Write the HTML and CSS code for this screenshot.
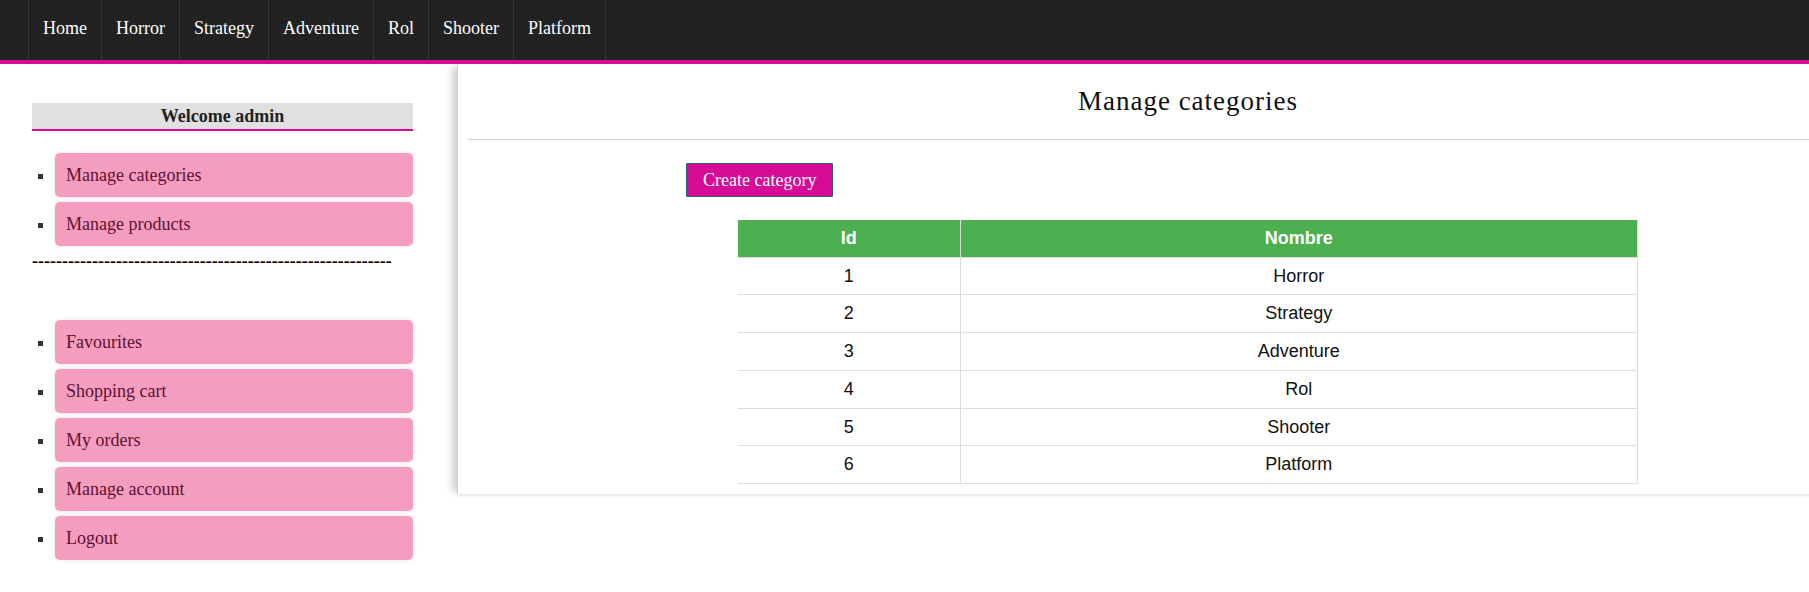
FILE: index.html
```html
<!DOCTYPE html>
<html lang="en">
<head>
<meta charset="utf-8">
<title>Manage categories</title>
<link rel="stylesheet" href="styles.css">
</head>
<body>
<nav class="topnav">
  <ul class="topnav-list">
    <li><a href="#">Home</a></li>
    <li><a href="#">Horror</a></li>
    <li><a href="#">Strategy</a></li>
    <li><a href="#">Adventure</a></li>
    <li><a href="#">Rol</a></li>
    <li><a href="#">Shooter</a></li>
    <li><a href="#">Platform</a></li>
  </ul>
</nav>
<div class="layout">
  <aside class="sidebar">
    <div class="welcome">Welcome admin</div>
    <ul class="side-menu side-menu-admin">
      <li><a href="#">Manage categories</a></li>
      <li><a href="#">Manage products</a></li>
    </ul>
    <div class="divider">------------------------------------------------------------</div>
    <ul class="side-menu side-menu-user">
      <li><a href="#">Favourites</a></li>
      <li><a href="#">Shopping cart</a></li>
      <li><a href="#">My orders</a></li>
      <li><a href="#">Manage account</a></li>
      <li><a href="#">Logout</a></li>
    </ul>
  </aside>
  <main class="panel">
    <div class="panel-header">
      <h2 class="panel-title">Manage categories</h2>
    </div>
    <div class="toolbar">
      <button class="btn-create" type="button">Create category</button>
    </div>
    <table class="data-table">
      <thead>
        <tr><th class="col-id">Id</th><th>Nombre</th></tr>
      </thead>
      <tbody>
        <tr><td>1</td><td>Horror</td></tr>
        <tr><td>2</td><td>Strategy</td></tr>
        <tr><td>3</td><td>Adventure</td></tr>
        <tr><td>4</td><td>Rol</td></tr>
        <tr><td>5</td><td>Shooter</td></tr>
        <tr><td>6</td><td>Platform</td></tr>
      </tbody>
    </table>
  </main>
</div>
</body>
</html>
```
FILE: styles.css
```css
* { box-sizing: border-box; }

html, body {
  margin: 0;
  padding: 0;
  background: #fff;
  font-family: "Liberation Serif", "Times New Roman", serif;
  font-size: 18px;
  color: #111;
  overflow: hidden;
}

/* top navigation */
.topnav {
  background: #222;
  height: 64px;
  border-bottom: 4px solid #d80b96;
  padding-left: 28px;
}
.topnav-list {
  list-style: none;
  margin: 0;
  padding: 0;
  display: flex;
  height: 60px;
  border-left: 1px solid #363636;
}
.topnav-list li {
  border-right: 1px solid #363636;
}
.topnav-list a {
  display: block;
  height: 60px;
  line-height: 56px;
  padding: 0 14px;
  color: #fff;
  text-decoration: none;
}

/* layout */
.layout {
  display: flex;
  align-items: flex-start;
  overflow: hidden;
  width: 100%;
}

.sidebar {
  flex: 0 0 457px;
  padding: 39px 44px 20px 32px;
}

.welcome {
  background: #e0e0e0;
  border-bottom: 2px solid #d80b96;
  height: 28px;
  line-height: 26px;
  text-align: center;
  font-weight: bold;
  color: #222;
}

.side-menu {
  list-style: square;
  margin: 22px 0 0;
  padding-left: 23px;
  color: #333;
}
.side-menu-user { margin-top: 48px; }
.side-menu li { margin-bottom: 5px; }
.side-menu a {
  display: block;
  height: 44px;
  line-height: 44px;
  padding-left: 11px;
  background: #f49dbe;
  border-radius: 5px;
  color: #5e1131;
  text-decoration: none;
  box-shadow: 0 0 4px rgba(200, 80, 110, 0.18);
}

.divider {
  line-height: 21px;
  font-weight: bold;
  color: #000;
  white-space: nowrap;
}

/* main panel */
.panel {
  flex: 0 0 1461px;
  background: #fff;
  border-left: 1px solid #d0d0d0;
  padding: 0 10px 10px;
  box-shadow: -7px 0 8px -3px rgba(0, 0, 0, 0.22), 0 2px 3px rgba(0, 0, 0, 0.04);
}

.panel-header {
  padding: 22px 0 23px;
  border-bottom: 1px solid #cfcfcf;
}
.panel-title {
  margin: 0;
  font-size: 27px;
  font-weight: normal;
  letter-spacing: 1px;
  line-height: 30px;
  text-align: center;
  color: #111;
}

.toolbar {
  width: 1004px;
  margin: 23px auto 0;
}
.btn-create {
  display: block;
  font-family: "Liberation Serif", "Times New Roman", serif;
  font-size: 18px;
  line-height: 20px;
  padding: 6px 16px;
  background: #d80b96;
  color: #fff;
  border: 1px solid #245e80;
  border-radius: 1px;
}

.data-table {
  width: 900px;
  margin: 23px auto 0;
  border-collapse: collapse;
  font-family: "Liberation Sans", Arial, sans-serif;
  font-size: 18px;
  color: #111;
}
.data-table th,
.data-table td {
  padding: 8px;
  text-align: center;
  border-bottom: 1px solid #ddd;
  border-right: 1px solid #ddd;
  line-height: 20.7px;
}
.data-table th {
  background: #4caf50;
  color: #fff;
  font-weight: bold;
}
.data-table .col-id { width: 222px; }
```
